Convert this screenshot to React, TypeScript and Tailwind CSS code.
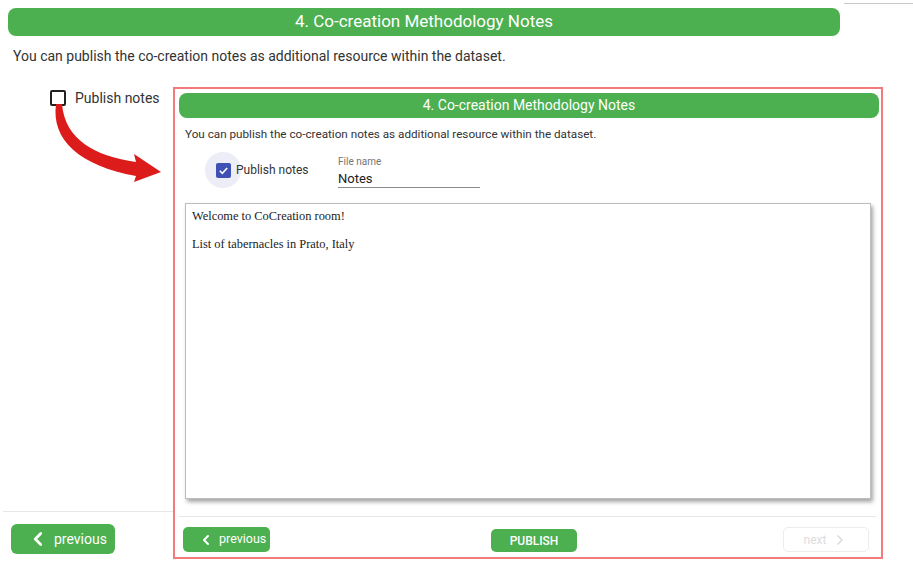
import { ChevronLeft, ChevronRight } from "lucide-react";

const GREEN = "bg-[#4caf50]";

function CurvedArrow() {
  return (
    <svg width="173" height="82" viewBox="0 104 173 82" className="-mt-[2px] block">
      <path
        d="M56 104 C51 140 80 166 136 176 L134 182 L161 172 L134 154 L136 162 C95 156 65 140 62 104 Z"
        fill="#dc1b1b"
      />
    </svg>
  );
}

export default function App() {
  return (
    <div
      className="relative h-[570px] w-[913px] overflow-hidden bg-white text-[#333]"
      style={{ fontFamily: "Roboto, 'Liberation Sans', sans-serif" }}
    >
      {/* top bar */}
      <div className="flex items-start">
        <div className={`ml-2 mt-2 flex h-[28px] w-[832px] items-center justify-center rounded-lg ${GREEN} text-[17px] text-white`}>
          4. Co-creation Methodology Notes
        </div>
        <div className="ml-[4px] mt-[3px] flex-1 border-t border-[#c8c8c8]" />
      </div>
      <p className="ml-[13px] mt-[11px] text-[14px] leading-[18px]">
        You can publish the co-creation notes as additional resource within the dataset.
      </p>

      <div className="mt-[22px] flex h-[472px]">
        {/* left, original page */}
        <div className="flex w-[173px] flex-col">
          <div className="mt-[3px] flex h-4 items-center pl-[50px]">
            <div className="h-4 w-4 rounded-[2px] border-2 border-[#222]" />
            <span className="ml-[9px] text-[14px] leading-4">Publish notes</span>
          </div>
          <CurvedArrow />
          <div className="ml-[3px] mt-auto border-t border-[#e6e6e6]" />
          <button className={`ml-[11px] mt-[12px] flex h-[30px] w-[104px] items-center rounded-md ${GREEN} pl-[16px] text-[14px] text-white`}>
            <ChevronLeft size={22} strokeWidth={3} />
            <span className="ml-[5px]">previous</span>
          </button>
          <div className="h-[5px]" />
        </div>

        {/* right, zoomed panel */}
        <div className="flex w-[710px] flex-col border-2 border-[#f47b7b]">
          <div className={`ml-1 mr-[2px] mt-1 flex h-[25px] items-center justify-center rounded-lg ${GREEN} text-[14px] text-white`}>
            4. Co-creation Methodology Notes
          </div>
          <p className="ml-[10px] mt-2 text-[11.7px] leading-4">
            You can publish the co-creation notes as additional resource within the dataset.
          </p>

          <div className="mt-[10px] flex items-start">
            <div className="relative ml-[30px] flex h-9 w-[133px] items-center">
              <div className="absolute left-0 top-0 h-9 w-9 rounded-full bg-[#ecedf6]" />
              <div className="relative ml-[11px] flex h-[15px] w-[15px] items-center justify-center rounded-[2px] bg-[#3f51b5]">
                <svg width="11" height="11" viewBox="0 0 24 24">
                  <path d="M4 12.5 L9.5 18 L20 6.5" fill="none" stroke="white" strokeWidth="3.5" />
                </svg>
              </div>
              <span className="relative ml-[5px] text-[12px]">Publish notes</span>
            </div>
            <div className="mt-1 w-[142px]">
              <div className="text-[10px] leading-[12px] text-[#757575]">File name</div>
              <div className="mt-[3px] border-b border-[#8a8a8a] text-[13px] leading-4 text-[#222]">Notes</div>
            </div>
          </div>

          <div
            className="ml-[10px] mt-[15px] h-[296px] w-[686px] border border-[#bdbdbd] px-[6px] pt-[5px] text-[12.4px] leading-[15px] text-[#222] shadow-[2px_3px_4px_rgba(0,0,0,0.35)]"
            style={{ fontFamily: "'Liberation Serif', serif" }}
          >
            <p>Welcome to CoCreation room!</p>
            <p className="mt-[13px]">List of tabernacles in Prato, Italy</p>
          </div>

          <div className="ml-[3px] mt-[17px] w-[698px] border-t border-[#e8e8e8]" />

          <div className="ml-2 mt-[10px] flex items-start">
            <button className={`flex h-[25px] w-[87px] items-center rounded-[5px] ${GREEN} pl-[15px] text-[12.5px] text-white`}>
              <ChevronLeft size={16} strokeWidth={3} />
              <span className="ml-[5px]">previous</span>
            </button>
            <button className={`ml-[221px] mt-[2px] h-[23px] w-[86px] rounded-[5px] ${GREEN} text-[12px] font-medium text-white`}>
              PUBLISH
            </button>
            <button className="ml-[206px] flex h-[25px] w-[86px] items-center justify-center rounded-[5px] border border-[#ececec] text-[12px] text-[#dcdcdc]">
              <span>next</span>
              <ChevronRight size={16} strokeWidth={2.5} className="ml-[6px]" />
            </button>
          </div>
        </div>
      </div>
    </div>
  );
}
